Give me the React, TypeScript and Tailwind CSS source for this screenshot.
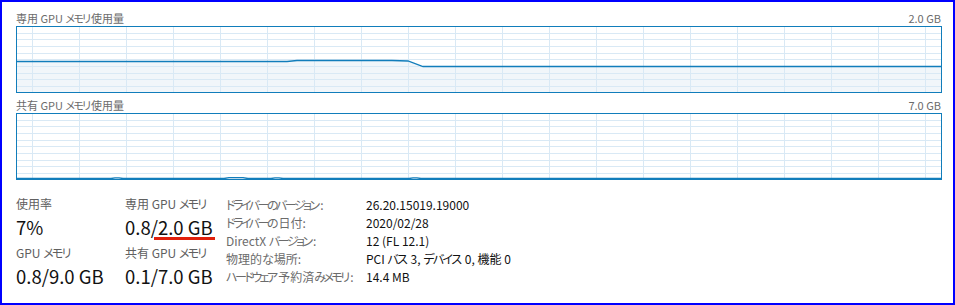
import React from "react";

const W = 926;
const H = 67;
const BLUE = "#117dbb";
const GRID = "#d9e9f5";

const vLines = Array.from({ length: 20 }, (_, i) => 16.5 + 47 * i);
const hLines = Array.from({ length: 9 }, (_, i) => Math.round(6.65 * (i + 1)) + 0.5);

const dedicatedLine =
  "M0 35.5 L271 35.5 L281 34.5 L376 34.5 L392 35 L407 40.5 L926 40.5";
const sharedLine =
  "M0 65.5 L95 65.5 L99 64.8 L103 64.8 L107 65.5 L208 65.5 L213 64.7 L227 64.7 L232 65.5 L255 65.5 L259 64.8 L263 64.8 L267 65.5 L393 65.5 L397 64.8 L401 64.8 L405 65.5 L926 65.5";

// the Windows UI font sets kana narrower than Noto does, so tighten kana runs
// (the last kana of a run keeps its advance so it does not run into what follows)
function Jp({ text, tight = false }: { text: string; tight?: boolean }) {
  const parts = text.split(/([\u3040-\u30ff]+)/);
  return (
    <>
      {parts.map((p, i) =>
        /[\u3040-\u30ff]/.test(p) ? (
          <React.Fragment key={i}>
            <span className={tight ? "tracking-[-2.5px]" : "tracking-[-1.7px]"}>
              {p.slice(0, -1)}
            </span>
            {p.slice(-1)}
          </React.Fragment>
        ) : (
          <React.Fragment key={i}>{p}</React.Fragment>
        )
      )}
    </>
  );
}

function Graph({ line }: { line: string }) {
  return (
    <svg width={W} height={H} className="block">
      <rect x={0} y={0} width={W} height={H} fill="#ffffff" />
      <path d={`${line} L926 67 L0 67 Z`} fill="#f1f6fa" />
      {vLines.map((x) => (
        <line key={`v-${x}`} x1={x} x2={x} y1={0} y2={H} stroke={GRID} strokeWidth={1} />
      ))}
      {hLines.map((y) => (
        <line key={`h-${y}`} x1={0} x2={W} y1={y} y2={y} stroke={GRID} strokeWidth={1} />
      ))}
      <path d={line} fill="none" stroke={BLUE} strokeWidth={1.3} />
      <rect x={0.5} y={0.5} width={W - 1} height={H - 1} fill="none" stroke={BLUE} strokeWidth={1} />
    </svg>
  );
}

function GraphHeader({ title, max }: { title: string; max: string }) {
  return (
    <div className="flex h-[16px] items-center justify-between text-[11px] leading-[16px] text-[#6b6b6b]">
      <span>
        <Jp text={title} />
      </span>
      <span className="pr-[1px]">{max}</span>
    </div>
  );
}

function Stat({ label, children }: { label: string; children: React.ReactNode }) {
  return (
    <div>
      <div className="text-[12px] leading-[16px] text-[#606060]">
        <Jp text={label} />
      </div>
      <div className="pt-[3px] text-[18.5px] leading-[25px] text-[#111111]">{children}</div>
    </div>
  );
}

const details: Array<[string, string]> = [
  ["ドライバーのバージョン:", "26.20.15019.19000"],
  ["ドライバーの日付:", "2020/02/28"],
  ["DirectX バージョン:", "12 (FL 12.1)"],
  ["物理的な場所:", "PCI バス 3, デバイス 0, 機能 0"],
  ["ハードウェア予約済みメモリ:", "14.4 MB"],
];

export default function App() {
  return (
    <div className="h-[305px] w-[955px] border-2 border-[#0000ff] bg-white pl-[14px] pr-[11px] pt-[8px] [font-family:'Noto_Sans_CJK_JP',sans-serif] [font-feature-settings:'palt']">
      <GraphHeader title="専用 GPU メモリ使用量" max="2.0 GB" />
      <Graph line={dedicatedLine} />
      <div className="mt-[4px]">
        <GraphHeader title="共有 GPU メモリ使用量" max="7.0 GB" />
      </div>
      <Graph line={sharedLine} />

      <div className="mt-[16px] flex">
        <div className="flex w-[109px] shrink-0 flex-col gap-[5px]">
          <Stat label="使用率">7%</Stat>
          <Stat label="GPU メモリ">0.8/9.0 GB</Stat>
        </div>
        <div className="flex w-[101px] shrink-0 flex-col gap-[5px]">
          <Stat label="専用 GPU メモリ">
            0.8/
            <span className="relative">
              2.0 GB
              <span className="absolute -left-[4px] -right-[2px] bottom-[0px] h-[3px] bg-[#e0200c]" />
            </span>
          </Stat>
          <Stat label="共有 GPU メモリ">0.1/7.0 GB</Stat>
        </div>
        <div className="flex flex-col text-[12px] leading-[18px]">
          {details.map(([k, v]) => (
            <div key={k} className="flex whitespace-nowrap">
              <span className="w-[140px] shrink-0 text-[#6b6b6b]">
                <Jp text={k} tight />
              </span>
              <span className="text-[#111111]">
                <Jp text={v} />
              </span>
            </div>
          ))}
        </div>
      </div>
    </div>
  );
}
